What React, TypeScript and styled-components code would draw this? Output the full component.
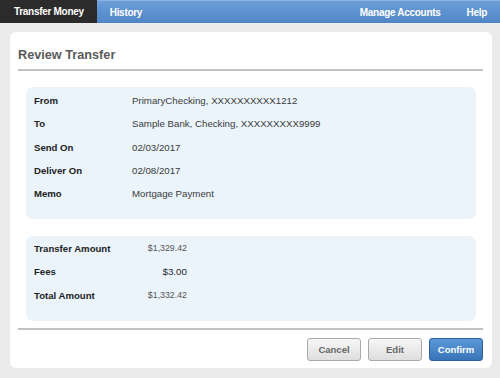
import styled, {createGlobalStyle} from 'styled-components';

const GlobalStyle = createGlobalStyle`
  html, body {
    margin: 0;
    padding: 0;
    background: #ebebeb;
    font-family: "Liberation Sans", Arial, sans-serif;
  }
`;

const NavBar = styled.nav`
  display: flex;
  height: 23px;
  background: linear-gradient(#6c9dd8, #4f86c6);
  border-top: 1px solid #8ab4e6;
  box-sizing: border-box;
`;

const NavItem = styled.a<{$active?: boolean; $push?: boolean}>`
  display: flex;
  align-items: center;
  padding: 0 13px 0 ${props => props.$active ? '14px' : '13px'};
  margin-left: ${props => props.$push ? 'auto' : '0'};
  margin-top: ${props => props.$active ? '-1px' : '0'};
  background: ${props => props.$active ? '#2b2b2b' : 'transparent'};
  color: #fff;
  font-size: 10px;
  font-weight: bold;
  letter-spacing: -0.3px;
  text-decoration: none;
`;

const Card = styled.section`
  margin: 9px 8px 10px 10px;
  padding: 15px 9px 7px 8px;
  background: #fff;
  border-radius: 6px;
`;

const Title = styled.h1`
  margin: 0;
  font-size: 12.7px;
  line-height: 16px;
  font-weight: bold;
  color: #5a5a5a;
`;

const Divider = styled.hr<{$gap: number}>`
  margin: ${props => props.$gap}px 0 0;
  border: 0;
  border-top: 2px solid #c2c2c2;
`;

const InfoBox = styled.div<{$top: number; $padTop: number}>`
  margin: ${props => props.$top}px 7px 0 8px;
  padding: ${props => props.$padTop}px 8px 14px;
  background: #ebf4fb;
  border-radius: 7px;
`;

const Row = styled.div`
  display: grid;
  grid-template-columns: 98px 1fr;
  align-items: center;
  height: 23.3px;
`;

const AmountRow = styled(Row)`
  grid-template-columns: 98px 55px;
  height: 23.5px;
`;

const Label = styled.span`
  font-size: 9.6px;
  font-weight: bold;
  color: #222;
`;

const Value = styled.span`
  font-size: 9.7px;
  color: #3a3a3a;
`;

const Amount = styled.span<{$strong?: boolean}>`
  text-align: right;
  font-size: ${props => props.$strong ? '9.8px' : '8.8px'};
  color: ${props => props.$strong ? '#2a2a2a' : '#555'};
`;

const Actions = styled.div`
  display: flex;
  justify-content: flex-end;
  gap: 7px;
  margin-top: 8px;
`;

const Button = styled.button<{$primary?: boolean}>`
  width: 54px;
  height: 23px;
  padding: 0;
  border-radius: 3px;
  border: 1px solid ${props => props.$primary ? '#2e5f9c' : '#a9a9a9'};
  background: ${props => props.$primary
    ? 'linear-gradient(#5a98d8, #3a74b8)'
    : 'linear-gradient(#f7f7f7, #dedede)'};
  color: ${props => props.$primary ? '#fff' : '#666'};
  font-family: inherit;
  font-size: 9.5px;
  font-weight: bold;
`;

const details = [
    ['From', 'PrimaryChecking, XXXXXXXXXX1212'],
    ['To', 'Sample Bank, Checking, XXXXXXXXX9999'],
    ['Send On', '02/03/2017'],
    ['Deliver On', '02/08/2017'],
    ['Memo', 'Mortgage Payment'],
];

const amounts = [
    {label: 'Transfer Amount', value: '$1,329.42'},
    {label: 'Fees', value: '$3.00', strong: true},
    {label: 'Total Amount', value: '$1,332.42'},
];

const App = () => {
    return (
        <>
            <GlobalStyle />
            <NavBar>
                <NavItem $active href="#">Transfer Money</NavItem>
                <NavItem href="#">History</NavItem>
                <NavItem $push href="#">Manage Accounts</NavItem>
                <NavItem href="#">Help</NavItem>
            </NavBar>
            <Card>
                <Title>Review Transfer</Title>
                <Divider $gap={6} />
                <InfoBox $top={16} $padTop={2}>
                    {details.map(([label, value]) => (
                        <Row key={label}>
                            <Label>{label}</Label>
                            <Value>{value}</Value>
                        </Row>
                    ))}
                </InfoBox>
                <InfoBox $top={17} $padTop={0}>
                    {amounts.map(a => (
                        <AmountRow key={a.label}>
                            <Label>{a.label}</Label>
                            <Amount $strong={a.strong}>{a.value}</Amount>
                        </AmountRow>
                    ))}
                </InfoBox>
                <Divider $gap={7} />
                <Actions>
                    <Button>Cancel</Button>
                    <Button>Edit</Button>
                    <Button $primary>Confirm</Button>
                </Actions>
            </Card>
        </>
    );
};

export default App;
